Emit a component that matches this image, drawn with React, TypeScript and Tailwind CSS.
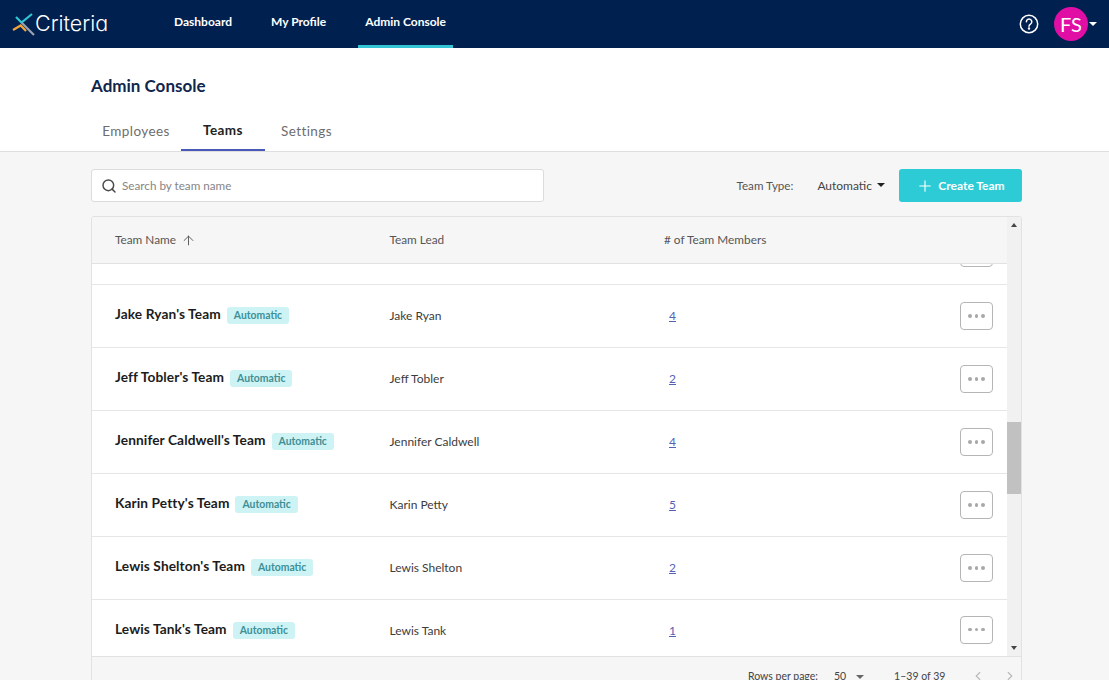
import { Search, ArrowUp, Plus, ChevronLeft, ChevronRight } from 'lucide-react';

const TEAMS = [
  { name: "Jake Ryan's Team", lead: 'Jake Ryan', members: 4 },
  { name: "Jeff Tobler's Team", lead: 'Jeff Tobler', members: 2 },
  { name: "Jennifer Caldwell's Team", lead: 'Jennifer Caldwell', members: 4 },
  { name: "Karin Petty's Team", lead: 'Karin Petty', members: 5 },
  { name: "Lewis Shelton's Team", lead: 'Lewis Shelton', members: 2 },
];

function Caret({ className }: { className: string }) {
  return <span className={`inline-block w-0 h-0 border-x-[4px] border-x-transparent border-t-[4px] ${className}`} />;
}

function MoreButton({ className = '' }: { className?: string }) {
  return (
    <button className={`w-[33px] h-[28px] shrink-0 rounded-[4px] border border-[#b5b5b5] bg-white flex items-center justify-center gap-[3px] ${className}`}>
      <span className="w-[3.5px] h-[3.5px] rounded-full bg-[#a8a8a8]" />
      <span className="w-[3.5px] h-[3.5px] rounded-full bg-[#a8a8a8]" />
      <span className="w-[3.5px] h-[3.5px] rounded-full bg-[#a8a8a8]" />
    </button>
  );
}

function TeamRow({ name, lead, members, last }: { name: string; lead: string; members: number; last?: boolean }) {
  return (
    <div className={`flex items-center bg-white pl-[23px] pr-[14px] ${last ? 'h-[56px] pt-[6px]' : 'h-[63px] border-b border-[#e6e6e6]'}`}>
      <div className="w-[274.5px] flex items-center gap-[6px]">
        <span className="text-[13.7px] font-bold text-[#1c1c1c] tracking-[0.1px] -mt-[3px]">{name}</span>
        <span className="h-[17px] px-[7px] rounded-[3px] bg-[#cdf3f5] text-[#3f8f96] text-[10.4px] font-bold flex items-center">Automatic</span>
      </div>
      <div className="w-[274.5px] text-[12px] text-[#3c3c3c]">{lead}</div>
      <div className="flex-1 text-[12px] text-[#5561b5]"><span className="underline ml-[5px]">{members}</span></div>
      <MoreButton className={last ? '-mt-[3px]' : ''} />
    </div>
  );
}

export default function App() {
  return (
    <div className="h-[680px] w-full overflow-hidden flex flex-col bg-[#f6f6f6] font-['Lato','Liberation_Sans',sans-serif]">
      {/* top nav */}
      <header className="h-12 shrink-0 bg-[#002050] flex items-center pl-[12px] pr-[12px]">
        <div className="w-[155px] flex items-center">
          <svg width="24" height="24" viewBox="0 0 24 24" fill="none" strokeWidth="2.2">
            <path d="M4 5 L9.5 10.5 L20 2" stroke="#2ec7d3" />
            <path d="M10 11 L22 23" stroke="#9aa3ad" />
            <path d="M1 18 L8.7 13.5 L14 19" stroke="#f0a63c" />
          </svg>
          <span className="text-[21.5px] leading-none font-light text-white font-['Inter',sans-serif] [font-feature-settings:'cv11'] -ml-[1px]">Criteria</span>
        </div>
        <nav className="flex h-full gap-[25px] text-[12px] font-bold text-white">
          <a className="h-full flex items-center px-[7px] pb-[2px] border-b-[3px] border-transparent">Dashboard</a>
          <a className="h-full flex items-center px-[7px] pb-[2px] border-b-[3px] border-transparent">My Profile</a>
          <a className="h-full flex items-center px-[7px] pb-[2px] border-b-[3px] border-[#33c4d6]">Admin Console</a>
        </nav>
        <div className="ml-auto flex items-center">
          <svg width="20" height="20" viewBox="0 0 20 20" fill="none" stroke="white" strokeWidth="1.5">
            <circle cx="10" cy="10" r="8.7" />
            <path d="M7.4 7.8a2.7 2.7 0 1 1 4.2 2.2c-1 .7-1.6 1.1-1.6 2.3" strokeLinecap="round" />
            <circle cx="10" cy="14.6" r="0.5" fill="white" />
          </svg>
          <div className="ml-[15px] w-[34px] h-[34px] rounded-full bg-[#e10ea6] text-white text-[20px] flex items-center justify-center">FS</div>
          <Caret className="ml-[1px] border-t-white" />
        </div>
      </header>

      {/* page title + tabs */}
      <section className="h-[104px] shrink-0 bg-white border-b border-[#dedede] pl-[91px] flex flex-col">
        <h1 className="mt-[26px] text-[17px] leading-[24px] font-bold text-[#10264d]">Admin Console</h1>
        <div className="mt-auto flex text-[13.5px] tracking-[0.4px] text-[#6d6d6d]">
          <a className="w-[90px] h-[39px] flex items-center justify-center">Employees</a>
          <a className="w-[84px] h-[39px] flex items-center justify-center font-bold text-[#222] border-b-2 border-[#4a58b8]">Teams</a>
          <a className="w-[83px] h-[39px] flex items-center justify-center">Settings</a>
        </div>
      </section>

      <main className="flex-1 min-h-0 pr-[87px] pl-[91px] pt-[17px]">
        {/* toolbar */}
        <div className="flex items-center h-[33px]">
          <div className="w-[453px] h-[33px] rounded-[3px] bg-white border border-[#dcdcdc] flex items-center pl-[9px]">
            <Search size={16} strokeWidth={2.2} className="text-[#4a4a4a]" />
            <span className="ml-[5px] text-[11.7px] text-[#858585]">Search by team name</span>
          </div>
          <span className="ml-auto text-[11.6px] text-[#555]">Team Type:</span>
          <span className="ml-[24px] text-[12px] text-[#444]">Automatic</span>
          <Caret className="ml-[5px] -mt-[2px] border-t-[#222]" />
          <button className="ml-[14px] w-[123px] h-[33px] rounded-[3px] bg-[#2dcbd5] text-white text-[12px] font-bold flex items-center justify-center gap-[4px]">
            <Plus size={18} strokeWidth={1.5} />
            Create Team
          </button>
        </div>

        {/* table */}
        <div className="mt-[14px] w-[931px] h-[480px] border border-[#e2e2e2] rounded-[3px] flex flex-col overflow-hidden">
          <div className="flex h-[439px]">
            <div className="flex-1 min-w-0 flex flex-col">
              <div className="h-[47px] shrink-0 flex items-center pl-[23px] text-[11.8px] text-[#555] border-b border-[#e2e2e2] bg-[#f6f6f6]">
                <div className="w-[274.5px] flex items-center gap-[5px]">Team Name <ArrowUp size={15} strokeWidth={1.5} className="text-[#555]" /></div>
                <div className="w-[274.5px]">Team Lead</div>
                <div># of Team Members</div>
              </div>
              <div className="h-[21px] shrink-0 bg-white border-b border-[#e6e6e6] overflow-hidden flex items-end justify-end pr-[14px] pb-[17px]">
                <MoreButton />
              </div>
              {TEAMS.map((t) => (
                <TeamRow key={t.name} {...t} />
              ))}
              <TeamRow name="Lewis Tank's Team" lead="Lewis Tank" members={1} last />
            </div>
            {/* scrollbar */}
            <div className="w-[14px] shrink-0 bg-[#f1f1f1] flex flex-col items-center">
              <span className="mt-[6px] w-0 h-0 border-x-[3px] border-x-transparent border-b-[4px] border-b-[#444]" />
              <div className="mt-[195px] w-full h-[72px] bg-[#c1c1c1]" />
              <span className="mt-auto mb-[6px] w-0 h-0 border-x-[3px] border-x-transparent border-t-[4px] border-t-[#444]" />
            </div>
          </div>
          {/* pager */}
          <div className="h-[40px] shrink-0 border-t border-[#e2e2e2] flex items-start pt-[12px] text-[10.5px] text-[#444]">
            <span className="ml-[656px]">Rows per page:</span>
            <span className="ml-[16px]">50</span>
            <Caret className="ml-[10px] mt-[6px] border-t-[#666]" />
            <span className="ml-[30px]">1–39 of 39</span>
            <ChevronLeft size={14} className="ml-[26px] text-[#bbb]" />
            <ChevronRight size={14} className="ml-[18px] text-[#bbb]" />
          </div>
        </div>
      </main>
    </div>
  );
}
